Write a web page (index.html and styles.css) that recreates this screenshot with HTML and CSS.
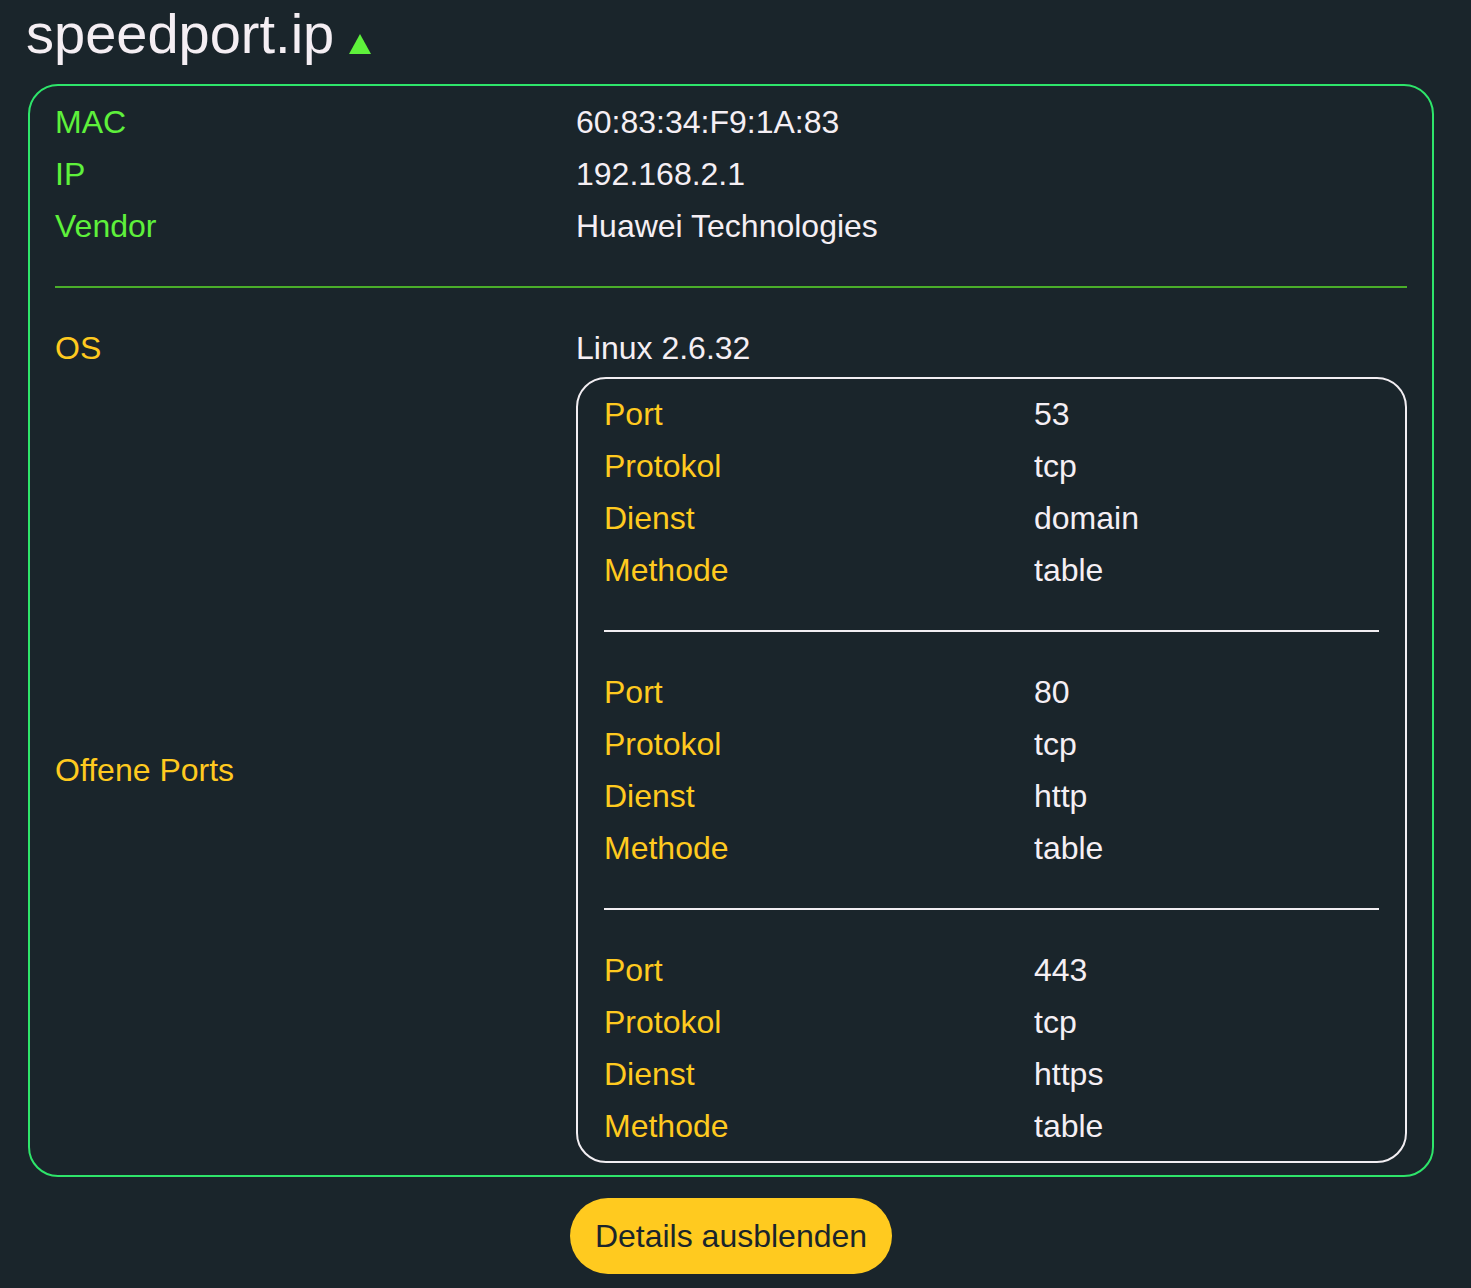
FILE: index.html
```html
<!DOCTYPE html>
<html lang="de">
<head>
<meta charset="utf-8">
<title>speedport.ip</title>
<link rel="stylesheet" href="styles.css">
</head>
<body>
<div class="page">
  <h1 class="title">speedport.ip<svg class="tri" width="22" height="20" viewBox="0 0 22 20"><polygon points="11,0 22,20 0,20" fill="#5ef13b"/></svg></h1>
  <div class="card">
    <div class="kv green">
      <div class="k">MAC</div><div class="v">60:83:34:F9:1A:83</div>
      <div class="k">IP</div><div class="v">192.168.2.1</div>
      <div class="k">Vendor</div><div class="v">Huawei Technologies</div>
    </div>
    <hr class="sep-green">
    <div class="kv yellow">
      <div class="k">OS</div><div class="v">Linux 2.6.32</div>
      <div class="k center">Offene Ports</div>
      <div class="v">
        <div class="ports">
          <div class="kv2">
            <div class="k">Port</div><div class="v">53</div>
            <div class="k">Protokol</div><div class="v">tcp</div>
            <div class="k">Dienst</div><div class="v">domain</div>
            <div class="k">Methode</div><div class="v">table</div>
          </div>
          <hr class="sep-white">
          <div class="kv2">
            <div class="k">Port</div><div class="v">80</div>
            <div class="k">Protokol</div><div class="v">tcp</div>
            <div class="k">Dienst</div><div class="v">http</div>
            <div class="k">Methode</div><div class="v">table</div>
          </div>
          <hr class="sep-white">
          <div class="kv2">
            <div class="k">Port</div><div class="v">443</div>
            <div class="k">Protokol</div><div class="v">tcp</div>
            <div class="k">Dienst</div><div class="v">https</div>
            <div class="k">Methode</div><div class="v">table</div>
          </div>
        </div>
      </div>
    </div>
  </div>
  <div class="actions">
    <button class="btn" type="button">Details ausblenden</button>
  </div>
</div>
</body>
</html>
```
FILE: styles.css
```css
html, body {
  margin: 0;
  padding: 0;
  background: #1a252b;
}
body {
  font-family: "Liberation Sans", Arial, sans-serif;
  color: #f5eff4;
}
.page {
  padding: 2px 37px 0 26px;
}
.title {
  margin: 0 0 18px 0;
  font-size: 56px;
  font-weight: normal;
  line-height: 64px;
  color: #f4eef3;
  display: flex;
  align-items: baseline;
}
.tri {
  margin-left: 15px;
  position: relative;
  top: 1px;
}
.card {
  margin-left: 2px;
  border: 2px solid #2ee56a;
  border-radius: 30px;
  padding: 10px 25px 9px;
}
.kv {
  display: grid;
  grid-template-columns: 521px 1fr;
  font-size: 32px;
  line-height: 52px;
}
.kv.green .k { color: #5ef13b; }
.kv.yellow .k { color: #ffca1f; }
.kv .v { color: #f5eff4; }
.kv .k.center {
  align-self: center;
}
.sep-green {
  border: 0;
  height: 2px;
  background: #4aae2a;
  margin: 34px 0;
}
.ports {
  margin: 3px 0;
  border: 2px solid #f2eef2;
  border-radius: 30px;
  padding: 9px 26px 9px 26px;
}
.kv2 {
  display: grid;
  grid-template-columns: 430px 1fr;
}
.kv2 .k { color: #ffca1f; }
.kv2 .v { color: #f5eff4; }
.sep-white {
  border: 0;
  height: 2px;
  background: #f2eef2;
  margin: 34px 0;
}
.actions {
  display: flex;
  justify-content: center;
  margin-left: 2px;
  padding-top: 21px;
}
.btn {
  font-family: "Liberation Sans", Arial, sans-serif;
  font-size: 32px;
  line-height: 36px;
  padding: 20px 25px;
  border: 0;
  border-radius: 38px;
  background: #ffca1f;
  color: #1a252b;
}
```
